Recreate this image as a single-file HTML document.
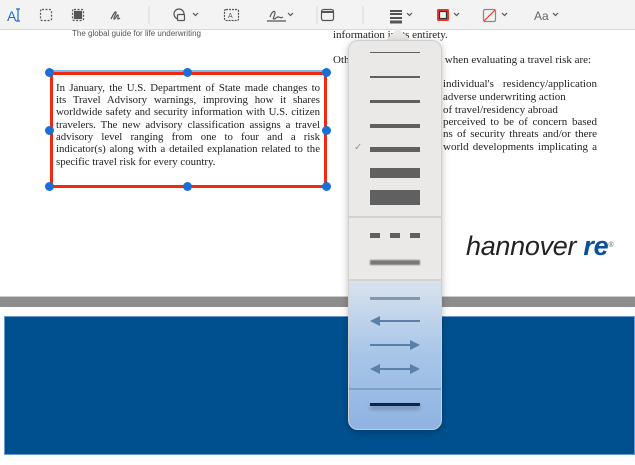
<!DOCTYPE html>
<html><head><meta charset="utf-8"><style>
*{margin:0;padding:0;box-sizing:border-box}
body{width:635px;height:465px;overflow:hidden;background:#fff;position:relative;font-family:"Liberation Serif",serif;color:#222}
.tb{position:absolute;left:0;top:0;width:635px;height:30px;background:#f3f3f3;border-bottom:1px solid #d8d8d8}
.ab{position:absolute}
.t{position:absolute;font-size:11px;line-height:12.3px;white-space:nowrap}
.j{position:absolute;left:443px;width:154px;font-size:11px;line-height:12.3px;white-space:nowrap;text-align:justify;text-align-last:justify}
.bx{position:absolute;left:56px;width:264px;font-size:10.8px;line-height:12.3px;white-space:nowrap;text-align:justify;text-align-last:justify}
.pop{position:absolute;left:348px;top:40px;width:94px;height:390px;border-radius:10px;background:linear-gradient(#ebe9e7 0,#ebe9e7 238px,#d9e3ee 240px,#a9c6e8 310px,#8eb2e2 390px);box-shadow:0 2px 8px rgba(0,0,0,.25);border:1px solid #cfcfcf}
.ln{position:absolute;left:21px;width:50px;background:#606060}
.dv{position:absolute;left:0;width:92px;height:2px;background:#d2d2d2}
.h{position:absolute;width:9px;height:9px;border-radius:50%;background:#1a6fd6}
</style></head><body>
<div class="tb">
<svg width="635" height="30" style="position:absolute;left:0;top:0" fill="none" stroke="#555" stroke-width="1.2">
<text x="7" y="21" font-family="Liberation Sans" font-size="14" fill="#1a6fd6" stroke="none">A</text>
<path d="M18 9v12M16 9h4M16 21h4" stroke="#1a6fd6"/>
<rect x="40.5" y="9.5" width="11" height="11" rx="1.5" stroke-dasharray="2 1.5"/>
<rect x="72.5" y="9.5" width="11" height="11" rx="1.5" stroke-dasharray="2 1.5"/>
<rect x="74.5" y="11.5" width="7" height="7" fill="#555"/>
<path d="M111 19c2-4 4-8 5-7s-3 6-2 7 3-5 4-4-1 4 0 4 2-1 2-1"/>
<path d="M149 6v18" stroke="#ddd"/>
<circle cx="179" cy="14" r="5"/><rect x="177.5" y="14.5" width="7" height="6" rx="1" fill="#f3f3f3"/>
<path d="M193 13l2.5 2.5 2.5-2.5"/>
<rect x="224.5" y="9.5" width="14" height="11" rx="1.5" stroke-dasharray="2 1"/>
<text x="228" y="18" font-family="Liberation Sans" font-size="7" fill="#555" stroke="none">A</text>
<path d="M267 21h19M270 17c2-6 5-7 5-4s-3 6-1 6 3-3 5-2 2 1 4 0"/>
<path d="M288 13l2.5 2.5 2.5-2.5"/>
<path d="M317 6v18" stroke="#ddd"/>
<rect x="321.5" y="9.5" width="12" height="11" rx="2"/><path d="M322 12h11" stroke-width="2"/>
<path d="M363 6v18" stroke="#ddd"/>
<path d="M390 11h12M390 14h12M390 18h12" stroke-width="2"/><path d="M390 22h12" stroke-width="3"/>
<path d="M407 13l2.5 2.5 2.5-2.5"/>
<rect x="437" y="9" width="12" height="12" rx="1.5" fill="#e8362b" stroke="none"/>
<rect x="439.5" y="11.5" width="7" height="7" fill="#f3f3f3" stroke="#333"/>
<path d="M454 13l2.5 2.5 2.5-2.5"/>
<rect x="483.5" y="9.5" width="12" height="12" rx="1.5" stroke="#888"/><path d="M484 21l11-11" stroke="#e8362b"/>
<path d="M502 13l2.5 2.5 2.5-2.5"/>
<text x="534" y="20" font-family="Liberation Sans" font-size="12" fill="#666" stroke="none">Aa</text>
<path d="M553 13l2.5 2.5 2.5-2.5"/>
</svg>
</div>
<div class="t" style="left:72px;top:28px;font-family:'Liberation Sans',sans-serif;font-size:8px;color:#555">The global guide for life underwriting</div>
<div class="t" style="left:333px;top:29px">information in its entirety.</div>
<div class="t" style="left:333px;top:54px">Other factors to consider when evaluating a travel risk are:</div>
<div class="j" style="top:78px">individual's residency/application</div>
<div class="t" style="left:443px;top:91px">adverse underwriting action</div>
<div class="t" style="left:443px;top:104px">of travel/residency abroad</div>
<div class="j" style="top:116px">perceived to be of concern based</div>
<div class="j" style="top:128px">ns of security threats and/or there</div>
<div class="j" style="top:141px">world developments implicating a</div>
<div class="ab" style="left:50px;top:70px;width:277px;height:2px;background:#7ab8e8"></div>
<div class="ab" style="left:50px;top:72px;width:277px;height:116px;border:3px solid #f02a10"></div>
<div class="bx" style="top:82px">In January, the U.S. Department of State made changes to</div>
<div class="bx" style="top:94px">its Travel Advisory warnings, improving how it shares</div>
<div class="bx" style="top:106px">worldwide safety and security information with U.S. citizen</div>
<div class="bx" style="top:119px">travelers. The new advisory classification assigns a travel</div>
<div class="bx" style="top:131px">advisory level ranging from one to four and a risk</div>
<div class="bx" style="top:143px">indicator(s) along with a detailed explanation related to the</div>
<div class="t" style="left:56px;top:156px;font-size:10.8px">specific travel risk for every country.</div>
<div class="h" style="left:45px;top:68px"></div><div class="h" style="left:183px;top:68px"></div><div class="h" style="left:322px;top:68px"></div>
<div class="h" style="left:45px;top:126px"></div><div class="h" style="left:322px;top:126px"></div>
<div class="h" style="left:45px;top:182px"></div><div class="h" style="left:183px;top:182px"></div><div class="h" style="left:322px;top:182px"></div>
<div class="t" style="left:466px;top:230px;font-family:'Liberation Sans',sans-serif;font-style:italic;font-size:27px;line-height:32px;color:#222;letter-spacing:-0.3px">hannover <b style="color:#0a4f9a">re</b><span style="font-size:7px;vertical-align:top;font-style:normal;color:#555">®</span></div>
<div class="ab" style="left:0;top:296px;width:635px;height:11px;background:#8d8d8d;border-top:1px solid #ccc"></div>
<div class="ab" style="left:4px;top:316px;width:631px;height:139px;background:#00508f;border:1px solid #6a9bd0"></div>
<svg class="ab" style="left:384px;top:28px" width="28" height="14"><path d="M0 14L14 0L28 14Z" fill="#ebe9e7"/></svg>
<div class="pop">
<div class="ln" style="top:11px;height:1px"></div>
<div class="ln" style="top:35px;height:2px"></div>
<div class="ln" style="top:59px;height:3px"></div>
<div class="ln" style="top:83px;height:4px"></div>
<div class="ab" style="left:5px;top:101px;font-size:10px;color:#999;font-family:'DejaVu Sans'">✓</div>
<div class="ln" style="top:106px;height:5px"></div>
<div class="ln" style="top:127px;height:10px"></div>
<div class="ln" style="top:149px;height:15px"></div>
<div class="dv" style="top:175px"></div>
<div class="ln" style="top:192px;height:5px;background:repeating-linear-gradient(90deg,#606060 0 10px,transparent 10px 20px)"></div>
<div class="ln" style="top:219px;height:5px;background:#777;filter:blur(0.8px)"></div>
<div class="dv" style="top:238px"></div>
<div class="ln" style="top:256px;height:3px;background:#8497ac"></div>
<svg class="ab" style="left:21px;top:272px" width="50" height="86" fill="#5a7fa8">
<path d="M0 8L10 3V7H50V9H10V13Z"/>
<path d="M50 32L40 27V31H0V33H40V37Z"/>
<path d="M0 56L10 51V55H40V51L50 56L40 61V57H10V61Z"/>
</svg>
<div class="dv" style="top:347px;background:#7fa2cc"></div>
<div class="ln" style="top:362px;height:3px;background:#0b2550;box-shadow:0 3px 4px rgba(0,0,0,.3)"></div>
</div>
</body></html>
